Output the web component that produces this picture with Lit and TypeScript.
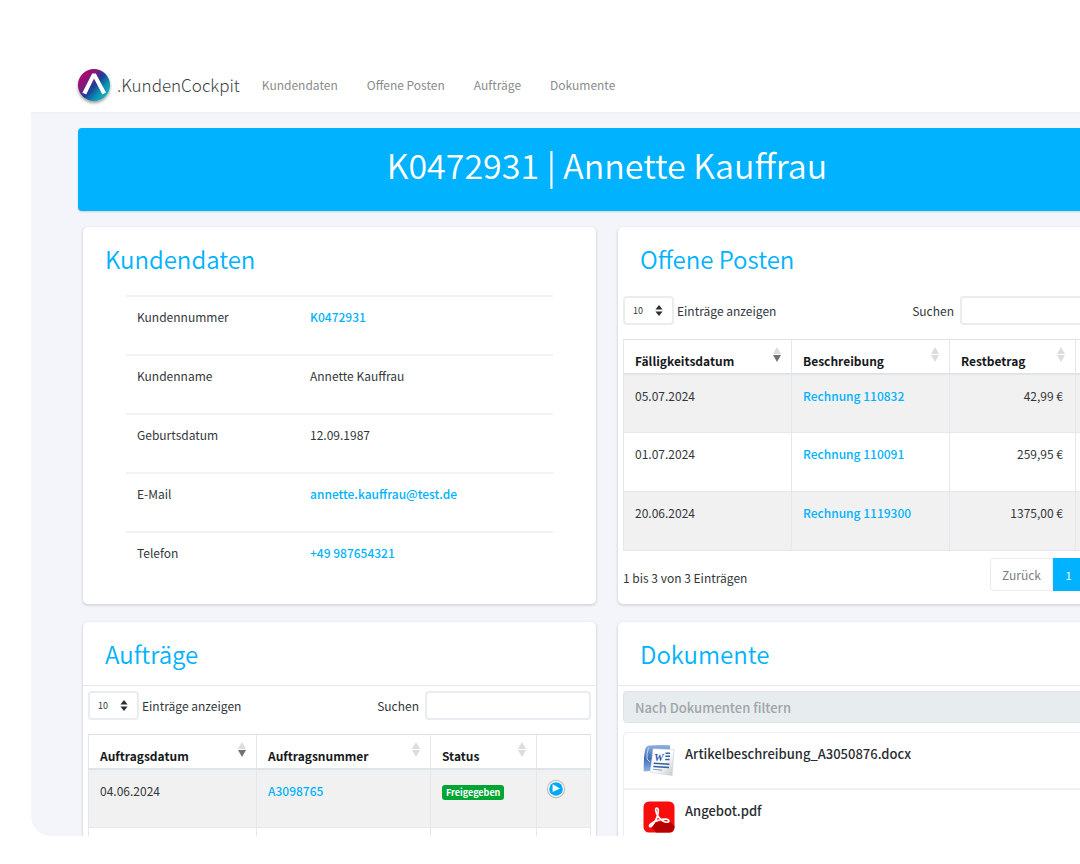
import { LitElement, html, css, nothing, TemplateResult } from "lit";
import { customElement } from "lit/decorators.js";
import { classMap } from "lit/directives/class-map.js";

type SortState = "down" | "none";
interface Column { label: string; sort?: SortState; }

const customer = [
  { label: "Kundennummer", value: "K0472931", href: "#kunde" },
  { label: "Kundenname", value: "Annette Kauffrau" },
  { label: "Geburtsdatum", value: "12.09.1987" },
  { label: "E-Mail", value: "annette.kauffrau@test.de", href: "mailto:annette.kauffrau@test.de" },
  { label: "Telefon", value: "+49 987654321", href: "tel:+49987654321" },
];

const invoices = [
  { due: "05.07.2024", text: "Rechnung 110832", rest: "42,99 €" },
  { due: "01.07.2024", text: "Rechnung 110091", rest: "259,95 €" },
  { due: "20.06.2024", text: "Rechnung 1119300", rest: "1375,00 €" },
];

const invoiceColumns: Column[] = [
  { label: "Fälligkeitsdatum", sort: "down" },
  { label: "Beschreibung", sort: "none" },
  { label: "Restbetrag", sort: "none" },
  { label: "" },
];

const orderColumns: Column[] = [
  { label: "Auftragsdatum", sort: "down" },
  { label: "Auftragsnummer", sort: "none" },
  { label: "Status", sort: "none" },
  { label: "" },
];

const logo = html`<svg class="logo" viewBox="0 -3 40 42" aria-hidden="true">
  <defs>
    <linearGradient id="lg" x1="0.1" y1="0.15" x2="0.9" y2="0.85">
      <stop offset="0" stop-color="#b4006e" />
      <stop offset="0.3" stop-color="#7d1c7e" />
      <stop offset="0.52" stop-color="#1c3f94" />
      <stop offset="0.75" stop-color="#0b8fae" />
      <stop offset="1" stop-color="#06b4c4" />
    </linearGradient>
    <filter id="ls" x="-30%" y="-30%" width="160%" height="170%">
      <feDropShadow dx="0" dy="2" stdDeviation="1.6" flood-color="#000" flood-opacity="0.4" />
    </filter>
  </defs>
  <circle cx="20" cy="18" r="16" fill="url(#lg)" filter="url(#ls)" />
  <path d="M18.200 6.600H21.800L32 25.600 28.400 27.400 20 11.400 12.200 27.400 8.400 25.800Z" fill="#fff" />
</svg>`;

const sortIcon = (state: SortState) => html`<svg class="sort" viewBox="0 0 8 16" aria-hidden="true">
  <path d="M4 0 8 7H0Z" fill="#dcdcdf" />
  <path d="M0 8H8L4 15Z" fill=${state === "down" ? "#6f7174" : "#dcdcdf"} />
</svg>`;

const playIcon = html`<svg class="play-icon" viewBox="0 0 20 20" aria-hidden="true">
  <circle cx="10" cy="10" r="8.6" fill="#fff" stroke="#bfbfbf" stroke-width="1.2" />
  <circle cx="10" cy="10" r="6.8" fill="#00a8f8" />
  <path d="M6.600 5.200 14 9.600 6.600 13Z" fill="#fff" />
</svg>`;

const wordIcon = html`<svg class="file-icon" viewBox="0 0 32 32" aria-hidden="true">
  <defs>
    <linearGradient id="wb" x1="0" y1="0" x2="0" y2="1">
      <stop offset="0" stop-color="#8fb2e3" /><stop offset="0.5" stop-color="#3f6db8" /><stop offset="1" stop-color="#8db4e6" />
    </linearGradient>
    <linearGradient id="wp" x1="0" y1="0" x2="1" y2="1">
      <stop offset="0.5" stop-color="#fff" /><stop offset="1" stop-color="#c3c6ca" />
    </linearGradient>
  </defs>
  <path d="M6 1.500Q15 .5 27 1.200L27 6H11L7 27 .8 27.600Q.4 14 2 6 3 2.200 6 1.500Z" fill="url(#wb)" />
  <path d="M5.500 3.500Q3.500 10 4 15L7 18" fill="none" stroke="#c4d8f3" stroke-width="1" />
  <path d="M10 4.800 31 5.500 29.200 31.500 7.500 28.200Z" fill="url(#wp)" stroke="#cdd1d6" stroke-width=".6" />
  <text x="11" y="17" font-family="Liberation Serif, serif" font-weight="700" font-style="italic" font-size="11" fill="#2d5ca8">W</text>
  <path d="M22.500 9.200H27M22.400 12.300H27M22.200 15.500H26.600M10.600 19.300 26.400 20.200M10.300 22.400 26 23.600" stroke="#33609f" stroke-width="1.500" />
  <path d="M10 25.300 19 26.200" stroke="#7a9bcb" stroke-width="1" />
</svg>`;

const pdfIcon = html`<svg class="file-icon" viewBox="0 0 32 32" aria-hidden="true">
  <rect x=".5" y=".5" width="31" height="31" rx="5.500" fill="#f80d0d" />
  <path d="M7.500 25.500 13 21.500 26 20 31.500 25V26Q31.500 31.500 26 31.500H13Z" fill="#b80000" />
  <path d="M13.800 7C11.900 7 12.600 11.500 15 15.200 17.400 18.800 21.600 21.600 24.600 21.200 26.800 20.900 26.200 18.200 22.800 18.200 17.500 18.200 11.500 20.200 7.800 23 5.400 25 7 27 9 24.600 12 21 14.400 16 15.100 12 15.600 9 15.200 7 13.800 7Z" fill="none" stroke="#fff" stroke-width="1.700" stroke-linejoin="round" />
</svg>`;

const documents = [
  { name: "Artikelbeschreibung_A3050876.docx", icon: wordIcon },
  { name: "Angebot.pdf", icon: pdfIcon },
];

@customElement("app-root")
export class AppRoot extends LitElement {
  static styles = css`
    :host {
      display: block;
      overflow: hidden;
      background: #fff;
      color: #33373b;
      font: 12px/20px "Noto Sans CJK SC", "Noto Sans", sans-serif;
      --blue: #00b2ff;
      --line: #e9edf1;
    }
    * { box-sizing: border-box; }
    a { color: var(--blue); text-decoration: none; }
    button, input, select { font: inherit; color: inherit; }
    h1, h2 { margin: 0; font-weight: 400; }

    .screen {
      height: calc(100vh - 28px);
      margin-left: 31px;
      overflow: hidden;
      background: #f4f5fa;
      border-radius: 0 0 0 20px;
    }
    .navbar {
      display: flex;
      align-items: center;
      height: 114px;
      padding: 58px 0 0 43px;
      background: #fff;
      border-bottom: 2px solid #edf0f4;
    }
    .logo { width: 40px; height: 42px; }
    .brand {
      display: flex;
      align-items: center;
      color: #3c3f42;
      font-size: 17px;
      font-weight: 300;
      margin-right: 22px;
    }
    .brand-name { padding-left: 3px; }
    .links { display: flex; gap: 29px; }
    .links a { color: #8a8c8e; }

    .content { margin: 14px -56px 0 47px; }
    .banner {
      height: 83px;
      padding-top: 17px;
      border-radius: 4px;
      background: var(--blue);
      color: #fff;
      text-align: center;
      box-shadow: 0 1px 2px rgba(0, 0, 0, 0.15);
    }
    .banner h1 { font-size: 34px; line-height: 40px; font-weight: 350; }
    .grid {
      display: grid;
      grid-template-columns: 1fr 1fr;
      gap: 18px 22px;
      padding: 16px 5px 0;
    }
    .card {
      background: #fff;
      border-radius: 5px;
      box-shadow: 0 1px 2px 1px rgba(40, 50, 60, 0.13);
    }
    .card h2 {
      height: 64px;
      padding: 16px 22px 0;
      color: var(--blue);
      font-size: 24px;
      font-weight: 350;
      line-height: 32px;
    }
    .card.ruled h2 { border-bottom: 1px solid #e6e9ec; }
    .body { padding: 5px 5px 13px; }

    table { width: 100%; border-collapse: collapse; }
    .facts { padding: 4px 43px 0; }
    .facts th, .facts td {
      height: 59px;
      padding: 10px 11px 0;
      border-top: 2px solid #f0f2f5;
      font-weight: 400;
      text-align: left;
      vertical-align: top;
    }
    .facts th { width: 173px; }
    .facts a, .data a { font-weight: 500; }

    .tools { display: flex; align-items: center; margin-bottom: 14px; }
    .tools label { display: flex; align-items: center; }
    .length { gap: 3px; }
    .search { gap: 6px; margin-left: auto; }
    .picker { position: relative; display: flex; }
    .picker select {
      width: 51px;
      height: 29px;
      padding: 0 8px;
      border: 2px solid var(--line);
      border-radius: 4px;
      appearance: none;
      background: #fff;
      font-size: 9px;
    }
    .picker svg {
      position: absolute;
      right: 11px;
      top: 9px;
      width: 8px;
      height: 11px;
      pointer-events: none;
    }
    .search input {
      width: 166px;
      height: 29px;
      padding: 0 8px;
      border: 2px solid var(--line);
      border-radius: 4px;
      background: #fff;
    }

    .data { table-layout: fixed; }
    .data th, .data td { border: 1px solid #e4e8ec; text-align: left; padding: 0 12px 0 11px; }
    .data th { height: 34px; border-bottom: 2px solid #dfe4e9; border-top-color: #dbe1e6; vertical-align: top; color: #16191c; }
    .data td { height: 59px; padding-top: 11px; vertical-align: top; }
    .data tbody tr:nth-child(odd) { background: #f1f1f1; }
    .data .amount { text-align: right; }
    .data .c1 { width: 168px; }
    .data .c2 { width: 158px; }
    .data .c3 { width: 126px; }
    .orders .c2 { width: 174px; }
    .orders .c3 { width: 106px; }
    .head {
      display: flex;
      justify-content: space-between;
      width: 100%;
      padding: 11px 0 0;
      border: 0;
      background: none;
      font-weight: 700;
      line-height: 20px;
      text-align: left;
    }
    .sort { width: 8px; height: 16px; margin: -4px -2px 0 0; }
    .badge {
      display: inline-block;
      padding: 0 4px;
      border-radius: 3px;
      background: #00a634;
      color: #fff;
      font-size: 9px;
      font-weight: 700;
      line-height: 15px;
    }
    .play { display: block; padding: 0; border: 0; background: none; margin: -2px 0 0 -2px; }
    .play-icon { display: block; width: 20px; height: 20px; }

    .foot { display: flex; justify-content: space-between; padding-top: 7px; }
    .info { padding-top: 10px; }
    .pager { display: flex; }
    .pager button {
      height: 33px;
      min-width: 42px;
      padding: 0 11px;
      border: 1px solid var(--line);
      background: #fff;
      color: #7b8085;
    }
    .pager button:first-child { border-radius: 4px 0 0 4px; }
    .pager button:last-child { border-radius: 0 4px 4px 0; }
    .pager .current { min-width: 31px; background: var(--blue); border-color: var(--blue); color: #fff; font-size: 11px; }
    .pager svg { display: block; width: 6px; height: 10px; margin: 0 auto; }

    .filter {
      display: block;
      width: 100%;
      height: 32px;
      padding: 0 11px;
      border: 1px solid #dde3e7;
      border-radius: 4px;
      background: #e7ecef;
      font-size: 13px;
      font-weight: 500;
    }
    .filter::placeholder { color: #a0a5a9; opacity: 1; }
    .files { margin: 9px 0 0; padding: 0; list-style: none; border: 1px solid #eceef1; border-radius: 4px; }
    .files li { height: 57px; border-bottom: 2px solid #f0f1f3; }
    .files a { display: flex; gap: 10px; padding: 11px 19px; color: #2a2d30; font-size: 13px; font-weight: 500; }
    .file-icon { width: 32px; height: 32px; }
  `;

  private head(columns: Column[]): TemplateResult {
    return html`<thead><tr>
      ${columns.map((c, i) => html`<th scope="col" class="c${i + 1}">
        ${c.sort ? html`<button class="head" type="button">${c.label}${sortIcon(c.sort)}</button>` : nothing}
      </th>`)}
    </tr></thead>`;
  }

  private tools(id: string): TemplateResult {
    return html`<div class="tools">
      <label class="length" for="${id}-length">
        <span class="picker">
          <select id="${id}-length"><option>10</option><option>25</option><option>50</option></select>
          <svg viewBox="0 0 8 11" aria-hidden="true"><path d="M4 0 7.600 4.600H.4ZM4 11 .4 6.400H7.600Z" fill="#2b2f33" /></svg>
        </span>
        Einträge anzeigen
      </label>
      <label class="search" for="${id}-search">Suchen <input id="${id}-search" type="text" /></label>
    </div>`;
  }

  private card(title: string, ruled: boolean, body: TemplateResult): TemplateResult {
    return html`<section class=${classMap({ card: true, ruled })}><h2>${title}</h2>${body}</section>`;
  }

  render() {
    return html`<div class="screen">
      <header class="navbar">
        <a class="brand" href="#start">${logo}<span class="brand-name">.KundenCockpit</span></a>
        <nav class="links">
          ${["Kundendaten", "Offene Posten", "Aufträge", "Dokumente"].map((n) => html`<a href="#nav">${n}</a>`)}
        </nav>
      </header>
      <main class="content">
        <div class="banner"><h1>K0472931 | Annette Kauffrau</h1></div>
        <div class="grid">
          ${this.card("Kundendaten", false, html`<div class="facts"><table><tbody>
            ${customer.map((r) => html`<tr><th scope="row">${r.label}</th>
              <td>${r.href ? html`<a href=${r.href}>${r.value}</a>` : r.value}</td></tr>`)}
          </tbody></table></div>`)}
          ${this.card("Offene Posten", false, html`<div class="body">
            ${this.tools("posten")}
            <table class="data">
              ${this.head(invoiceColumns)}
              <tbody>${invoices.map((r) => html`<tr><td>${r.due}</td><td><a href="#rechnung">${r.text}</a></td>
                <td class="amount">${r.rest}</td><td></td></tr>`)}</tbody>
            </table>
            <div class="foot">
              <span class="info">1 bis 3 von 3 Einträgen</span>
              <div class="pager">
                <button type="button">Zurück</button>
                <button class="current" type="button">1</button>
                <button type="button" aria-label="Nächste Seite"><svg viewBox="0 0 6 10" aria-hidden="true"><path d="M1 1 5 5 1 9" fill="none" stroke="currentColor" /></svg></button>
              </div>
            </div>
          </div>`)}
          ${this.card("Aufträge", true, html`<div class="body">
            ${this.tools("auftrag")}
            <table class="data orders">
              ${this.head(orderColumns)}
              <tbody>
                <tr><td>04.06.2024</td><td><a href="#auftrag">A3098765</a></td>
                  <td><span class="badge">Freigegeben</span></td>
                  <td><button class="play" type="button" aria-label="Öffnen">${playIcon}</button></td></tr>
                <tr><td></td><td></td><td></td><td></td></tr>
              </tbody>
            </table>
          </div>`)}
          ${this.card("Dokumente", true, html`<div class="body">
            <input class="filter" type="text" placeholder="Nach Dokumenten filtern" aria-label="Nach Dokumenten filtern" />
            <ul class="files">${documents.map((d) => html`<li><a href="#datei">${d.icon}<span>${d.name}</span></a></li>`)}</ul>
          </div>`)}
        </div>
      </main>
    </div>`;
  }
}
